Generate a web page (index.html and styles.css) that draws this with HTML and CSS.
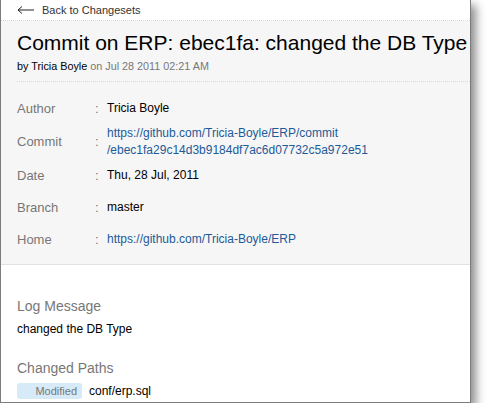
FILE: index.html
```html
<!DOCTYPE html>
<html>
<head>
<meta charset="utf-8">
<link rel="stylesheet" href="styles.css">
</head>
<body>
<div class="window">
  <div class="backbar">
    <svg class="arrow" width="18" height="10" viewBox="0 0 18 10"><path d="M1 5H17M1 5L5 1.5M1 5L5 8.5" fill="none" stroke="#222" stroke-width="1"/></svg>
    <span>Back to Changesets</span>
  </div>
  <div class="header">
    <h1 class="title">Commit on ERP: ebec1fa: changed the DB Type</h1>
    <div class="byline"><span class="who">by Tricia Boyle</span> on Jul 28 2011 02:21 AM</div>
    <div class="details">
      <div class="row"><span class="label">Author</span><span class="colon">:</span><span class="value">Tricia Boyle</span></div>
      <div class="row row-tall"><span class="label">Commit</span><span class="colon">:</span><span class="value link">https://github.com/Tricia-Boyle/ERP/commit<br>/ebec1fa29c14d3b9184df7ac6d07732c5a972e51</span></div>
      <div class="row"><span class="label">Date</span><span class="colon">:</span><span class="value">Thu, 28 Jul, 2011</span></div>
      <div class="row"><span class="label">Branch</span><span class="colon">:</span><span class="value">master</span></div>
      <div class="row"><span class="label">Home</span><span class="colon">:</span><span class="value link">https://github.com/Tricia-Boyle/ERP</span></div>
    </div>
  </div>
  <div class="body">
    <h2 class="section">Log Message</h2>
    <div class="message">changed the DB Type</div>
    <h2 class="section section-paths">Changed Paths</h2>
    <div class="path"><span class="badge">Modified</span><span class="file">conf/erp.sql</span></div>
  </div>
</div>
</body>
</html>
```
FILE: styles.css
```css
html, body {
  margin: 0;
  padding: 0;
  background: #fff;
}
body {
  font-family: "Liberation Sans", Arial, sans-serif;
  color: #000;
}
.window {
  width: 469px;
  height: 402px;
  border-left: 1px solid #7c7c7c;
  border-right: 1px solid #7c7c7c;
  border-bottom: 1px solid #7c7c7c;
  box-shadow: 5px 5px 9px rgba(0, 0, 0, 0.45);
  background: #fff;
  overflow: hidden;
}
.backbar {
  height: 21px;
  display: flex;
  align-items: center;
  padding-left: 16px;
  font-size: 11px;
  color: #333;
  border-bottom: 1px dotted #d8d8d8;
  box-sizing: border-box;
}
.arrow {
  margin-right: 7px;
}
.header {
  background: #f6f6f6;
  padding: 9px 0 9px 16px;
  border-bottom: 1px solid #e2e2e2;
}
.title {
  margin: 0;
  font-size: 21px;
  font-weight: normal;
  line-height: 26px;
  white-space: nowrap;
}
.byline {
  font-size: 10.8px;
  color: #777;
  line-height: 14px;
  margin-top: 3px;
  padding-bottom: 8px;
  border-bottom: 1px dotted #d8d8d8;
}
.byline .who {
  color: #000;
}
.details {
  padding-top: 10px;
}
.row {
  display: flex;
  align-items: center;
  min-height: 32px;
  font-size: 12px;
}
.row-tall {
  min-height: 35px;
}
.label {
  width: 78px;
  color: #777;
  font-size: 13px;
}
.colon {
  width: 12px;
  color: #777;
  font-size: 13px;
}
.value {
  line-height: 17px;
}
.link {
  color: #1d5a98;
}
.body {
  padding: 32px 16px 0 16px;
}
.section {
  margin: 0;
  font-size: 14px;
  font-weight: normal;
  color: #777;
  line-height: 18px;
}
.message {
  font-size: 12px;
  margin-top: 7px;
  line-height: 15px;
}
.section-paths {
  margin-top: 22px;
}
.path {
  display: flex;
  align-items: center;
  margin-top: 6px;
}
.badge {
  display: inline-block;
  width: 65px;
  height: 16px;
  line-height: 17px;
  box-sizing: border-box;
  padding-right: 5px;
  text-align: right;
  background: #d6eaf8;
  border-radius: 3px;
  font-size: 11px;
  color: #777;
}
.file {
  margin-left: 7px;
  font-size: 12px;
}
```
